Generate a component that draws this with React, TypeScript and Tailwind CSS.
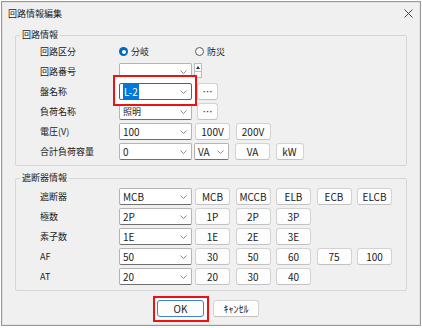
import React from 'react';

const Chevron = () => (
  <svg width="7" height="4" viewBox="0 0 7 4" className="shrink-0">
    <path d="M0.5 0.5 L3.5 3.5 L6.5 0.5" fill="none" stroke="#707070" strokeWidth="0.8" />
  </svg>
);

type ComboProps = { value?: React.ReactNode; className?: string; focused?: boolean };

const Combo = ({ value, className = 'w-[73px]', focused }: ComboProps) => (
  <div
    className={`${className} h-[17px] flex items-center justify-between pl-[3px] pr-[4px] bg-white rounded-[2px] border ${
      focused ? 'border-[#0078d4]' : 'border-[#b4b4b4] border-b-[#6e6e6e]'
    }`}
  >
    <span className="text-[10px] leading-[12px] text-[#1b1b1b] whitespace-nowrap">{value}</span>
    <Chevron />
  </div>
);

const Btn = ({ children, className = 'w-[35px]' }: { children: React.ReactNode; className?: string }) => (
  <div
    className={`${className} h-[17px] flex items-center justify-center bg-[#fdfdfd] border border-[#d3d3d3] border-b-[#c2c2c2] rounded-[3px] text-[10px] leading-[12px] text-[#1b1b1b]`}
  >
    {children}
  </div>
);

const Row = ({ label, children }: { label: string; children?: React.ReactNode }) => (
  <div className="flex items-center h-[17px]">
    <span className="w-[103px] pl-[24px] text-[9px] leading-[12px] text-[#1b1b1b] shrink-0">{label}</span>
    {children}
  </div>
);

const Buttons = ({ items }: { items: string[] }) => (
  <div className="flex ml-[3px] gap-[5.5px]">
    {items.map((t) => (
      <Btn key={t}>{t}</Btn>
    ))}
  </div>
);

const Radio = ({ checked, label, className }: { checked?: boolean; label: string; className: string }) => (
  <div className={`${className} flex items-center gap-[3px]`}>
    {checked ? (
      <span className="w-[9px] h-[9px] rounded-full bg-[#0067c0] flex items-center justify-center">
        <span className="w-[4px] h-[4px] rounded-full bg-white" />
      </span>
    ) : (
      <span className="w-[9px] h-[9px] rounded-full border border-[#5d5d5d] bg-[#f7f7f7]" />
    )}
    <span className="text-[9px] leading-[12px] text-[#1b1b1b]">{label}</span>
  </div>
);

export default function App() {
  return (
    <div className="w-[422px] h-[328px] bg-white pl-[1px] pt-[1px] font-[family-name:'Noto_Sans_CJK_JP','Noto_Sans',sans-serif]">
      <div className="w-[420px] h-[325px] bg-[#f0f0f0] border border-[#999999] shadow-[inset_0_0_0_1px_#e2e2e2]">
        {/* title bar */}
        <div className="h-[23px] flex items-center justify-between pl-[6px] pr-[7px]">
          <span className="text-[9px] leading-[12px] text-[#1b1b1b]">回路情報編集</span>
          <svg width="9" height="9" viewBox="0 0 9 9">
            <path d="M0.5 0.5 L8.5 8.5 M8.5 0.5 L0.5 8.5" stroke="#3a3a3a" strokeWidth="0.9" />
          </svg>
        </div>

        {/* 回路情報 */}
        <fieldset className="ml-[13px] mt-[4px] w-[392px] border border-[#d6d6d6] rounded-[2px] pt-[2px] pb-[5px]">
          <legend className="ml-[4px] px-[2px] text-[9px] leading-[12px] text-[#1b1b1b]">回路情報</legend>
          <div className="flex flex-col gap-[3px]">
            <Row label="回路区分">
              <Radio checked label="分岐" className="w-[76px]" />
              <Radio label="防災" className="" />
            </Row>
            <Row label="回路番号">
              <Combo />
              <div className="ml-[2px] self-start flex flex-col">
                <div className="w-[8px] h-[9px] bg-[#fbfbfb] border border-[#bdbdbd] flex items-center justify-center">
                  <svg width="4" height="3" viewBox="0 0 4 3">
                    <path d="M0 3 L2 0 L4 3 Z" fill="#333" />
                  </svg>
                </div>
                <div className="w-[8px] h-[6px] bg-[#fbfbfb] border border-t-0 border-[#bdbdbd]" />
              </div>
            </Row>
            <Row label="盤名称">
              <div className="relative z-[2]">
                <div className="absolute -z-10 left-[-6px] top-[-8px] w-[84px] h-[31px] bg-white border-2 border-[#ee1111]" />
                <Combo
                  focused
                  value={<span className="bg-[#0078d7] text-white px-[1px]">L-2</span>}
                />
              </div>
              <div className="ml-[5px]">
                <Btn className="w-[21px]">…</Btn>
              </div>
            </Row>
            <Row label="負荷名称">
              <Combo value={<span className="text-[9px]">照明</span>} />
              <div className="ml-[5px]">
                <Btn className="w-[21px]">…</Btn>
              </div>
            </Row>
            <Row label="電圧(V)">
              <Combo value="100" />
              <Buttons items={['100V', '200V']} />
            </Row>
            <Row label="合計負荷容量">
              <Combo value="0" />
              <div className="ml-[2px]">
                <Combo value="VA" className="w-[35px]" />
              </div>
              <div className="ml-[6px] flex gap-[5.5px]">
                <Btn>VA</Btn>
                <Btn className="w-[28px]">kW</Btn>
              </div>
            </Row>
          </div>
        </fieldset>

        {/* 遮断器情報 */}
        <fieldset className="ml-[13px] mt-[6px] w-[392px] border border-[#d6d6d6] rounded-[2px] pt-[4px] pb-[5px]">
          <legend className="ml-[4px] px-[2px] text-[9px] leading-[12px] text-[#1b1b1b]">遮断器情報</legend>
          <div className="flex flex-col gap-[3px]">
            <Row label="遮断器">
              <Combo value="MCB" />
              <Buttons items={['MCB', 'MCCB', 'ELB', 'ECB', 'ELCB']} />
            </Row>
            <Row label="極数">
              <Combo value="2P" />
              <Buttons items={['1P', '2P', '3P']} />
            </Row>
            <Row label="素子数">
              <Combo value="1E" />
              <Buttons items={['1E', '2E', '3E']} />
            </Row>
            <Row label="AF">
              <Combo value="50" />
              <Buttons items={['30', '50', '60', '75', '100']} />
            </Row>
            <Row label="AT">
              <Combo value="20" />
              <Buttons items={['20', '30', '40']} />
            </Row>
          </div>
        </fieldset>

        {/* footer buttons */}
        <div className="flex mt-[9px] ml-[155px] gap-[9px]">
          <div className="relative z-[2]">
            <div className="absolute -z-10 left-[-4px] top-[-4px] w-[56px] h-[26px] bg-white border-2 border-[#ee1111]" />
            <div className="w-[47px] h-[17px] flex items-center justify-center bg-[#fdfdfd] border border-[#3f83d4] rounded-[3px] text-[10px] leading-[12px] text-[#1b1b1b]">
              OK
            </div>
          </div>
          <Btn className="w-[46px]">ｷｬﾝｾﾙ</Btn>
        </div>
      </div>
    </div>
  );
}
